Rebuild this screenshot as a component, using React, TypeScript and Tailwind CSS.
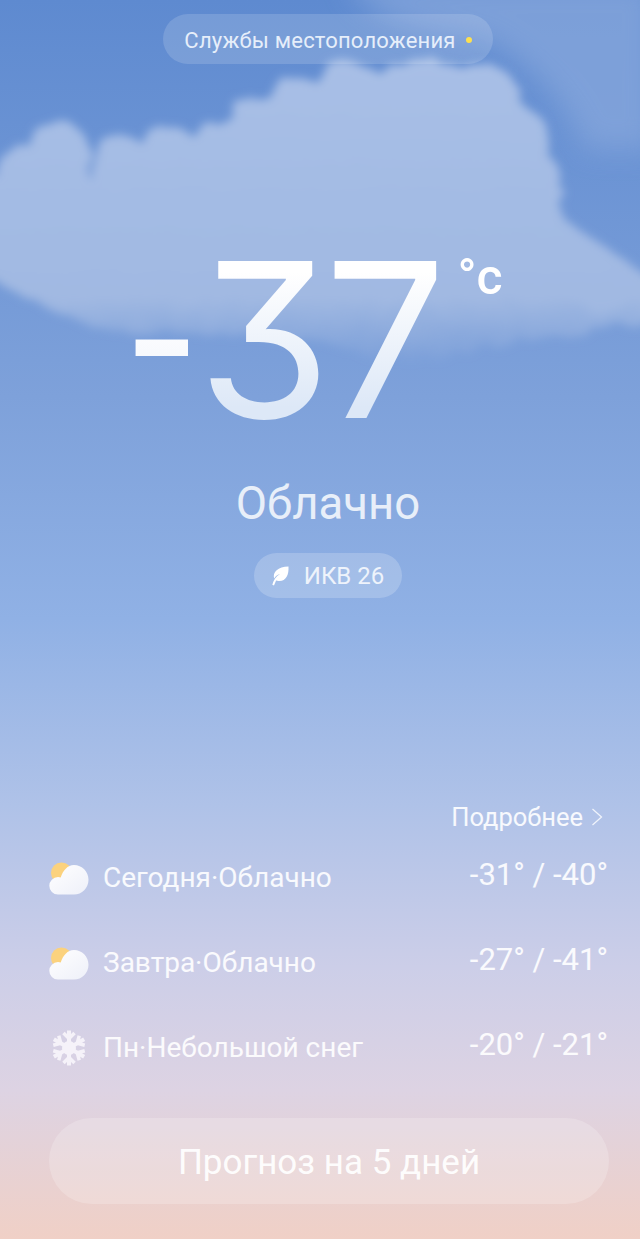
const rows = [
  { icon: "cloud", label: "Сегодня·Облачно", temp: "-31° / -40°" },
  { icon: "cloud", label: "Завтра·Облачно", temp: "-27° / -41°" },
  { icon: "snow", label: "Пн·Небольшой снег", temp: "-20° / -21°" },
];

// lobes along the top of the big cloud
const cloudLobes = [
  [25, 172, 26], [60, 150, 28], [60, 178, 28], [122, 168, 32], [168, 160, 34], [215, 155, 32],
  [262, 130, 34], [300, 115, 36], [350, 105, 42], [420, 100, 42], [480, 105, 42],
  [515, 140, 34], [530, 185, 34], [535, 230, 30], [570, 270, 32], [605, 285, 28],
];

function CloudBackdrop() {
  return (
    <svg className="absolute left-0 top-0" width="640" height="420" viewBox="0 0 640 420" aria-hidden="true">
      <defs>
        <filter id="fluff" x="-10%" y="-10%" width="120%" height="120%">
          <feTurbulence type="fractalNoise" baseFrequency="0.04" numOctaves="3" seed="4" />
          <feDisplacementMap in="SourceGraphic" scale="14" />
          <feGaussianBlur stdDeviation="5" />
        </filter>
        <filter id="haze" x="-20%" y="-20%" width="140%" height="140%">
          <feGaussianBlur stdDeviation="14" />
        </filter>
        <linearGradient id="body" gradientUnits="userSpaceOnUse" x1="0" y1="60" x2="0" y2="365">
          <stop offset="0" stopColor="#a8bfe6" />
          <stop offset="0.6" stopColor="#a2bae3" />
          <stop offset="0.78" stopColor="#a1b9e2" />
          <stop offset="1" stopColor="#a1b9e2" stopOpacity="0" />
        </linearGradient>
      </defs>
      <g fill="#84a5db" opacity="0.8" filter="url(#haze)">
        <path d="M345 -20h310v170h-70c-20-50-60-90-100-110-50-10-110-10-140-60z" />
      </g>
      <g filter="url(#fluff)" fill="url(#body)">
        <path d="M-20 175L40 175 92 178 135 160 250 110 300 80 480 65 540 120 565 220 660 285 660 320 530 340 400 365 320 340 100 330 30 300-20 270z" />
        {cloudLobes.map(([cx, cy, r]) => (
          <circle key={`${cx}-${cy}`} cx={cx} cy={cy} r={r} />
        ))}
      </g>
    </svg>
  );
}

function PartlyCloudy() {
  return (
    <svg width="40" height="33" viewBox="0 0 40 33" aria-hidden="true">
      <defs>
        <linearGradient id="puff" x1="0" y1="0" x2="1" y2="1">
          <stop offset="0" stopColor="#ffffff" />
          <stop offset="1" stopColor="#eef0f9" />
        </linearGradient>
      </defs>
      <circle cx="12.500" cy="11" r="10.500" fill="#fbd27e" />
      <path
        d="M9 32.500a8.700 8.700 0 0 1 0-17.400c1 0 2 .2 2.700.4C14 8.500 18.500 3 25 3c8 0 14.500 6.500 14.500 14.700S33 32.500 25 32.500z"
        fill="url(#puff)"
      />
    </svg>
  );
}

function Snowflake() {
  const arm = (deg: number) => (
    <g key={deg} transform={`rotate(${deg} 17 18)`}>
      <path d="M17 18V.5" stroke="#f5f2f9" strokeWidth="4" />
      <path d="M11.500 3 17 8.500 22.500 3" fill="none" stroke="#f5f2f9" strokeWidth="3.500" />
    </g>
  );
  return (
    <svg width="34" height="36" viewBox="0 0 34 36" aria-hidden="true">
      {[0, 60, 120, 180, 240, 300].map(arm)}
      <circle cx="17" cy="18" r="7" fill="#f5f2f9" />
    </svg>
  );
}

function Leaf() {
  return (
    <svg width="17" height="20" viewBox="0 0 17 20" aria-hidden="true">
      <path d="M16.500 .5C17 9 14 15.500 6.500 15c-.9 0-1.700-.2-2.400-.5L2 19.500.3 18.800C1.500 14 4 10.500 8 8 5 8.800 3.500 10.500 2.200 12.500 .2 6 6 .8 16.500 .5z" fill="#ffffff" />
    </svg>
  );
}

export default function App() {
  return (
    <div className="relative h-[1239px] w-[640px] overflow-hidden bg-[linear-gradient(180deg,#5e8ad0_0%,#7ea1da_32%,#90b1e5_50%,#afc2e8_65%,#cccee8_78%,#ddd3e3_88%,#f0d0c6_100%)] font-['Roboto',sans-serif] text-white">
      <CloudBackdrop />
      <div className="relative flex h-full flex-col items-center">
        <div className="ml-[16px] mt-[14px] flex h-[50px] w-[330px] items-center justify-center gap-[10px] rounded-full bg-white/15 pt-[2px] text-[22px] tracking-[0.2px] text-[#e6eefa]">
          <span>Службы местоположения</span>
          <span className="h-[6px] w-[6px] rounded-full bg-[#fde04f]" />
        </div>

        <div className="mt-[141px] flex h-[270px] w-full items-start justify-center pr-[1px]">
          <span className="-ml-[5px] bg-[linear-gradient(180deg,#ffffff_40%,#f0f4fb_70%)] bg-clip-text text-[220px] font-normal leading-[270px] text-transparent">
            -
          </span>
          <span className="ml-[5px] bg-[linear-gradient(180deg,#ffffff_25%,#dde8f7_75%)] bg-clip-text font-['Inter',sans-serif] text-[216px] font-normal leading-[270px] tracking-[-7px] text-transparent [font-feature-settings:'cv09']">
            37
          </span>
          <span className="ml-[18px] mt-[47px] text-[50px] font-medium leading-[50px] text-white">°c</span>
        </div>

        <div className="ml-[16px] mt-[3px] text-[45.500px] leading-[52px] text-[#e8eff9]">Облачно</div>

        <div className="ml-[16px] mt-[23px] flex h-[45px] w-[148px] items-center justify-center gap-[15px] rounded-full bg-white/20 text-[24px] text-[#eef3fb]">
          <Leaf />
          <span>ИКВ 26</span>
        </div>

        <div className="mt-auto w-full pb-[35px] pl-[49px] pr-[32px]">
          <div className="flex items-center justify-end gap-[8px] pr-[5px] text-[25.500px] leading-[28px] text-white/90">
            <span>Подробнее</span>
            <svg width="12" height="20" viewBox="0 0 12 20" fill="none" aria-hidden="true">
              <path d="M1.500 2l9 8-9 8" stroke="#fff" strokeOpacity="0.8" strokeWidth="1.300" />
            </svg>
          </div>
          <div className="mt-[27px] flex flex-col gap-[45px]">
            {rows.map((r) => (
              <div key={r.label} className="flex h-[40px] items-center justify-between text-white/90">
                <div className="flex items-center">
                  <div className="flex w-[54px] justify-start">
                    {r.icon === "cloud" ? <PartlyCloudy /> : <div className="pl-[3px]"><Snowflake /></div>}
                  </div>
                  <span className="text-[28px]">{r.label}</span>
                </div>
                <span className="pb-[5px] text-[31px]">{r.temp}</span>
              </div>
            ))}
          </div>
          <div className="mr-[-1px] mt-[50px] flex h-[86px] items-center justify-center rounded-[43px] bg-white/20 pt-[5px] text-[35px] text-white/95">
            Прогноз на 5 дней
          </div>
        </div>
      </div>
    </div>
  );
}
